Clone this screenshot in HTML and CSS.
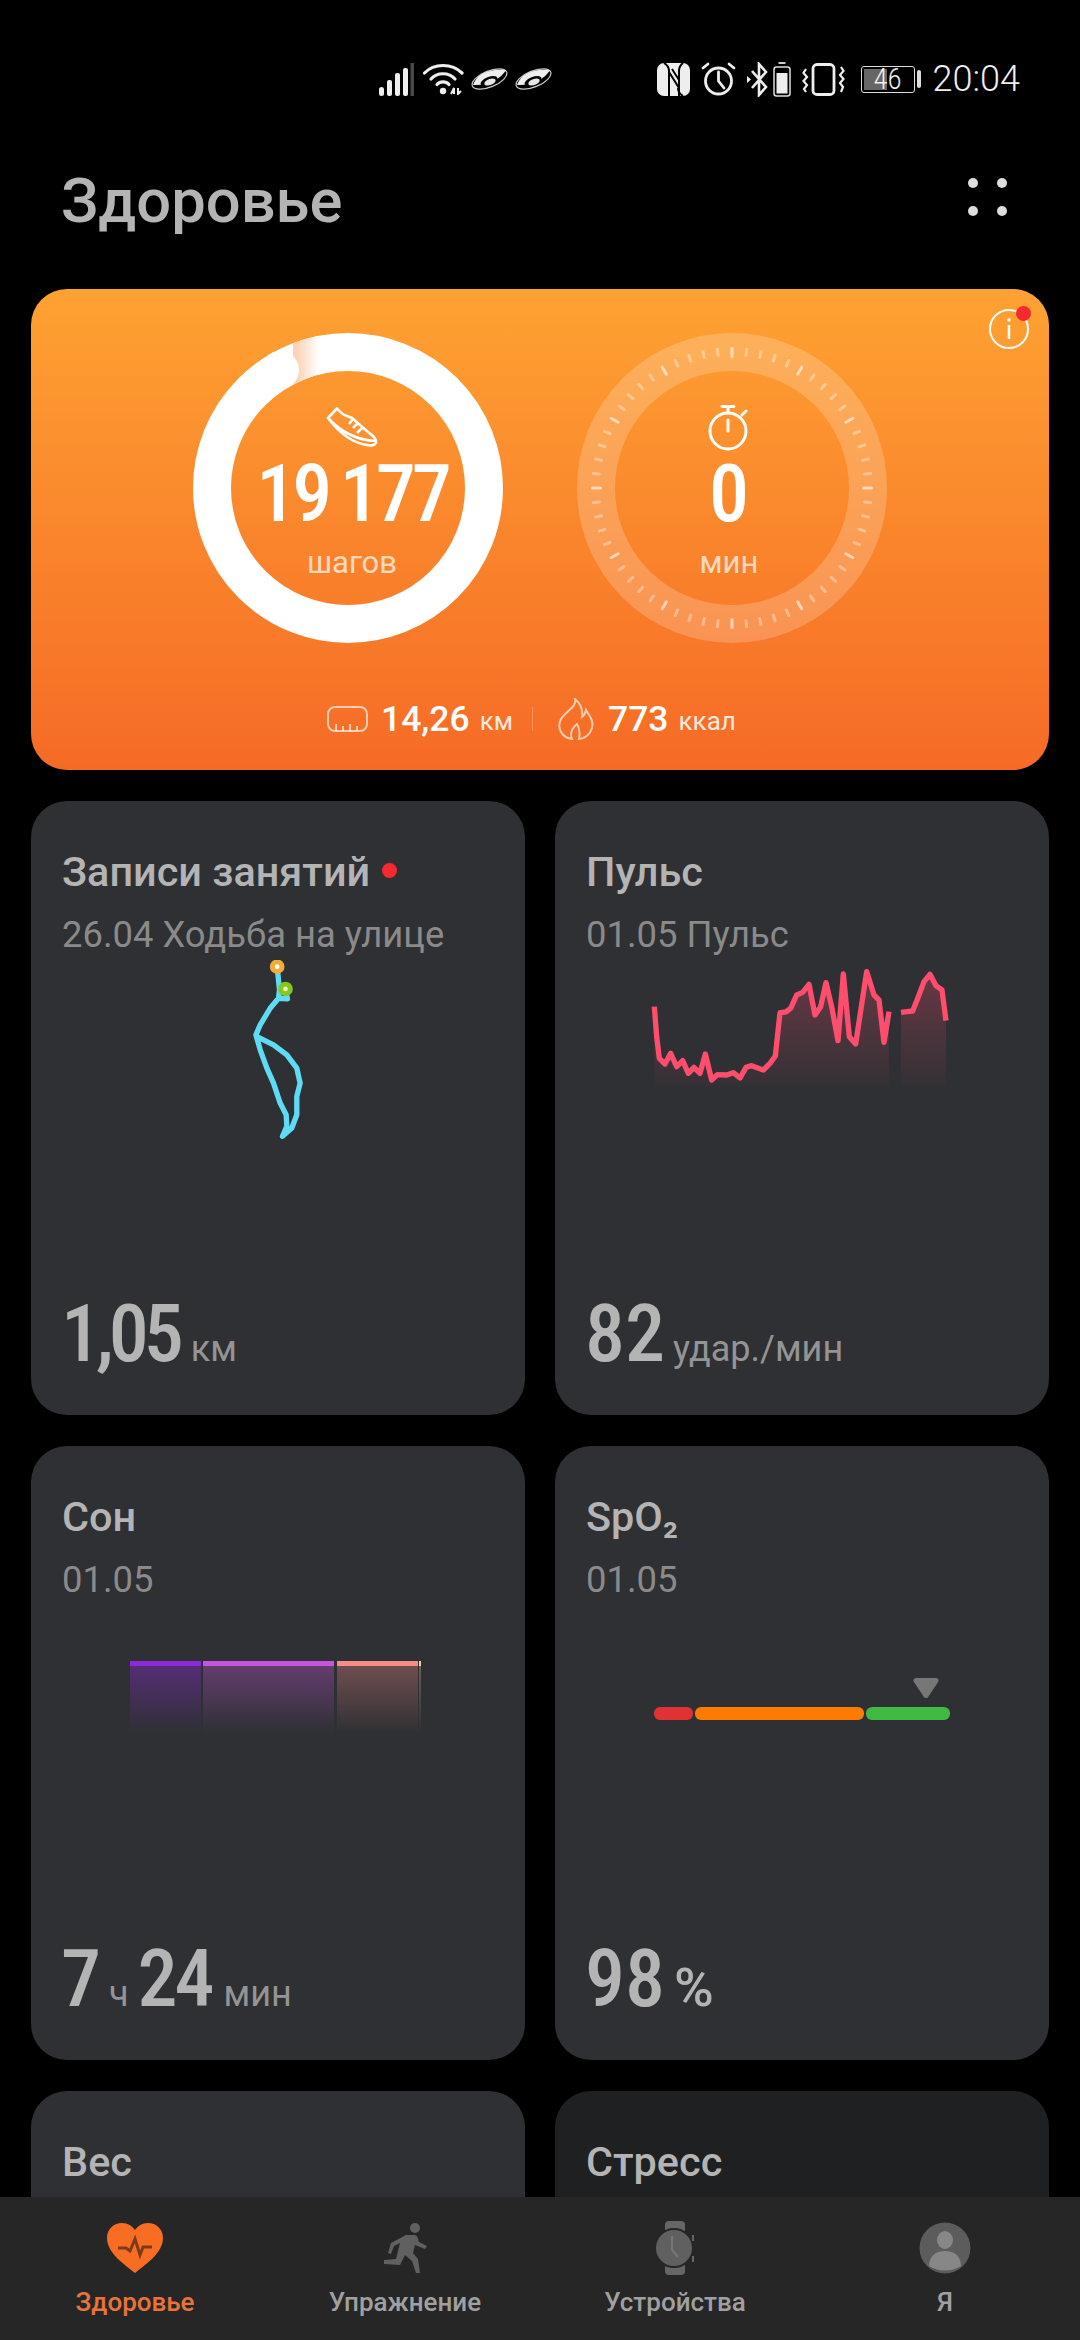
FILE: index.html
```html
<!DOCTYPE html>
<html lang="ru">
<head>
  <meta charset="UTF-8" />
  <title>Здоровье</title>
  <link rel="stylesheet" href="styles.css">
</head>
<body>
  <div class="statusbar">
    <div class="status-left">
      <svg class="s-signal" width="35" height="33" viewBox="0 0 35 33"><g fill="#eee"><rect x="0" y="24" width="5" height="9" rx="2.5"/><rect x="8" y="17" width="5" height="16" rx="2"/><rect x="16" y="10" width="5" height="23" rx="2"/><rect x="24" y="5" width="5" height="28" rx="2"/></g><rect x="31.5" y="0" width="3.5" height="33" fill="#4a4a4a"/></svg>
      <svg class="s-wifi" width="41" height="32" viewBox="0 0 41 32" fill="none" stroke="#eee" stroke-width="3.2" stroke-linecap="round"><path d="M1.5 10C11 0 29 0 39 10"/><path d="M8 16C14 9 26 9 32 16"/><path d="M14 21.500C17 18 23 18 26 21.500"/><circle cx="20" cy="28" r="3.200" fill="#eee" stroke="none"/><path d="M28 31L31 25V31M35 25V31L38 28" stroke-width="2" stroke-linecap="butt"/></svg>
      <svg class="s-ufo" width="37" height="24" viewBox="0 0 37 24"><ellipse cx="18.500" cy="12" rx="18.500" ry="8" transform="rotate(-22 18.500 12)" fill="none" stroke="#ccc" stroke-width="1.200"/><path d="M2 18C5 8 17 1 35 3C30 12 16 19 2 18Z" fill="#eee"/><ellipse cx="18" cy="14" rx="9" ry="4" transform="rotate(-22 18 14)" fill="#000"/><ellipse cx="19" cy="15" rx="6" ry="3" transform="rotate(-22 19 15)" fill="#e6e6e6"/></svg>
      <svg class="s-ufo" width="37" height="24" viewBox="0 0 37 24"><ellipse cx="18.500" cy="12" rx="18.500" ry="8" transform="rotate(-22 18.500 12)" fill="none" stroke="#ccc" stroke-width="1.200"/><path d="M2 18C5 8 17 1 35 3C30 12 16 19 2 18Z" fill="#eee"/><ellipse cx="18" cy="14" rx="9" ry="4" transform="rotate(-22 18 14)" fill="#000"/><ellipse cx="19" cy="15" rx="6" ry="3" transform="rotate(-22 19 15)" fill="#e6e6e6"/></svg>
    </div>
    <div class="status-right">
      <svg width="33" height="33" viewBox="0 0 33 33"><rect width="33" height="33" rx="7" fill="#eee"/><path d="M7 0Q12 3 12 8V33M12 9L22 25M15 6L22 17M22 33V8Q22 3 26 0M26 33Q21 30 21 25" fill="none" stroke="#000" stroke-width="2"/></svg>
      <svg class="s-alarm" width="35" height="34" viewBox="0 0 35 34" fill="none" stroke="#eee" stroke-width="2.800" stroke-linecap="round"><circle cx="17.500" cy="19" r="13"/><path d="M17.500 10V19L23 26M2 6L7 2M33 6L28 2"/></svg>
      <svg class="s-bt" width="23" height="35" viewBox="0 0 23 35"><path d="M5 9L19 25L12 33V2L19 10L5 26" fill="none" stroke="#eee" stroke-width="2.600"/><path d="M0 14L4 17.500L0 21Z" fill="#eee"/></svg>
      <svg class="s-bat" width="18" height="35" viewBox="0 0 18 35"><rect x="1" y="5" width="16" height="29" rx="2.500" fill="none" stroke="#ddd" stroke-width="1.500"/><rect x="5.500" y="0" width="7" height="2" fill="#ccc"/><rect x="3.500" y="11" width="11" height="20.500" fill="#eee"/></svg>
      <svg class="s-vib" width="43" height="33" viewBox="0 0 43 33" fill="none" stroke="#eee"><rect x="11" y="1.500" width="21" height="30" rx="4" stroke-width="2.800"/><path d="M4 6L1.500 10L5 14L1.500 18L5 22L2 26L4 29M39 4L41.500 8L38 12L41.500 16L38 20L41 24L39 29" stroke-width="2.200"/></svg>
      <div class="battery"><div class="battery-fill"></div><span>46</span></div>
      <div class="battery-tip"></div>
      <div class="clock">20:04</div>
    </div>
  </div>

  <div class="header">
    <h1>Здоровье</h1>
    <div class="dots"><i></i><i></i><i></i><i></i></div>
  </div>

  <div class="hero">
    <svg class="info" width="42" height="42" viewBox="0 0 42 42" fill="none" stroke="#fff" stroke-width="2"><circle cx="21" cy="21" r="19"/><path d="M21 17V31" stroke-width="2.500"/><circle cx="21" cy="12" r="1.800" fill="#fff" stroke="none"/></svg>
    <i class="info-dot"></i>
    <div class="rings">
      <div class="ring">
        <svg class="ring-bg" width="310" height="310" viewBox="0 0 310 310">
          <defs><linearGradient id="fade" gradientUnits="userSpaceOnUse" x1="104" x2="126" y1="0" y2="0"><stop offset="0" stop-color="#fcd3b6"/><stop offset="1" stop-color="#fff"/></linearGradient></defs>
          <circle cx="155" cy="155" r="136" fill="none" stroke="#fff" stroke-width="38"/>
          <path d="M100 10A155 155 0 0 1 126 3L131 40A117 117 0 0 0 100 52Z" fill="url(#fade)"/>
          <circle cx="87" cy="37" r="19" fill="#fff"/>
        </svg>
        <div class="ring-body to-right">
          <svg class="ring-icon" width="52" height="40" viewBox="0 0 52 40" fill="none" stroke="#fff" stroke-width="2.600" stroke-linejoin="round"><path d="M2 11L11 1.500C14 5 17 8 21 9L26 11L42 25C47 29 50.500 31 50 36C49 38 45 39 41 38C28 36 14 27 2 11Z"/><path d="M3 12C15 25 31 33 50 34M27 12L23 17M32 16L27 21M37 20L31 26"/></svg>
          <div class="ring-num ring-num-long">19 177</div>
          <div class="ring-label">шагов</div>
        </div>
      </div>
      <div class="ring">
        <svg class="ring-bg" id="dial" width="310" height="310" viewBox="0 0 310 310"><circle cx="155" cy="155" r="136" fill="none" stroke="#fff" stroke-opacity=".2" stroke-width="38"/></svg>
        <div class="ring-body to-left">
          <svg class="ring-icon watch" width="44" height="48" viewBox="0 0 44 48" fill="none" stroke="#fff" stroke-width="3"><circle cx="21" cy="27" r="18"/><path d="M15 2.500H27M21 3V9M21 16V27M35 11L39 7" stroke-linecap="round"/></svg>
          <div class="ring-num">0</div>
          <div class="ring-label">мин</div>
        </div>
      </div>
    </div>
    <div class="totals">
      <svg class="t-icon" width="41" height="26" viewBox="0 0 41 26" fill="none" stroke="#fff" stroke-opacity=".65" stroke-width="2"><rect x="1" y="1" width="39" height="24" rx="7"/><path d="M9 25V18M16 25V20M23 25V18M30 25V20"/></svg>
      <b>14,26</b><span>км</span>
      <i class="totals-sep"></i>
      <svg class="t-icon" width="38" height="42" viewBox="0 0 38 42" fill="none" stroke="#fff" stroke-opacity=".65" stroke-width="2"><path d="M18 1C20 9 9 13 4 21C-1 31 6 40 15 41C13 36 14 31 20 26C23 31 23 36 22 41C31 40 37 32 35 23C34 19 31 16 29 12C28 16 27 18 25 19C26 12 24 6 18 1Z"/></svg>
      <b>773</b><span>ккал</span>
    </div>
  </div>

  <div class="grid">
    <div class="card">
      <div class="card-title">Записи занятий<i class="red-dot"></i></div>
      <div class="card-sub">26.04 Ходьба на улице</div>
      <div class="card-chart">
        <svg class="route" width="57" height="183" viewBox="660 420 170 550">
          <path d="M741 440L748 510L745 535L720 565L690 615L677 645L690 690L710 745L730 790L750 850L768 885L770 920L757 950L785 925L800 885L800 830L810 790L800 745L770 705L730 675L680 650M745 535L772 537L766 507" fill="none" stroke="#5fdcf5" stroke-width="16" stroke-linecap="round" stroke-linejoin="round"/>
          <circle cx="741" cy="440" r="22" fill="#f2ac3a"/><circle cx="741" cy="440" r="7" fill="#fff"/>
          <circle cx="766" cy="507" r="22" fill="#84c71f"/><circle cx="766" cy="507" r="7" fill="#e8f5c0"/>
        </svg>
      </div>
      <div class="card-value"><b class="tight-more">1,05</b><span>км</span></div>
    </div>
    <div class="card">
      <div class="card-title">Пульс</div>
      <div class="card-sub">01.05 Пульс</div>
      <div class="card-chart">
        <svg class="pulse" id="pulse" width="360" height="170" viewBox="0 0 1080 510">
          <defs><linearGradient id="pulsefill" gradientUnits="userSpaceOnUse" x1="0" x2="0" y1="65" y2="410"><stop offset="0" stop-color="#ff4d6d" stop-opacity=".28"/><stop offset="1" stop-color="#ff4d6d" stop-opacity=".02"/></linearGradient></defs>
        </svg>
      </div>
      <div class="card-value"><b>82</b><span class="unit-near">удар./мин</span></div>
    </div>
    <div class="card">
      <div class="card-title">Сон</div>
      <div class="card-sub">01.05</div>
      <div class="card-chart">
        <div class="sleep">
          <div class="sleep-seg deep"></div>
          <div class="sleep-seg light"></div>
          <div class="sleep-seg rem"></div>
          <div class="sleep-seg wake"></div>
        </div>
      </div>
      <div class="card-value"><b>7</b><span class="unit-near">ч</span><b class="tight">24</b><span>мин</span></div>
    </div>
    <div class="card">
      <div class="card-title">SpO₂</div>
      <div class="card-sub">01.05</div>
      <div class="card-chart">
        <div class="spo">
          <svg class="spo-marker" width="26" height="20" viewBox="0 0 26 20"><path d="M3 2.500H23L13 17.500Z" fill="#777" stroke="#777" stroke-width="5" stroke-linejoin="round"/></svg>
          <div class="spo-bar"><i class="low"></i><i class="mid"></i><i class="high"></i></div>
        </div>
      </div>
      <div class="card-value"><b>98</b><span class="pct">%</span></div>
    </div>
    <div class="card"><div class="card-title">Вес</div></div>
    <div class="card card-dark"><div class="card-title">Стресс</div></div>
  </div>

  <div class="tabbar">
    <div class="tab active">
      <svg width="56" height="50" viewBox="0 0 56 50"><path d="M28 50C18 42 0 30 0 15C0 6 7 0 15 0C21 0 25 3 28 7C31 3 35 0 41 0C49 0 56 6 56 15C56 30 38 42 28 50Z" fill="#f96d22"/><path d="M11 25H19L23 28L28 16L33 32L36 24H45" fill="none" stroke="#7d3a1a" stroke-width="3"/></svg>
      <span>Здоровье</span>
    </div>
    <div class="tab">
      <svg width="46" height="52" viewBox="0 0 46 52" fill="#606060"><circle cx="33" cy="6" r="5"/><path d="M24 13L33 13C36 14 36 17 37 20L45 24L43 27L33 23L31 31L36 37L38 51H34L30 39L23 33L18 43L2 42V38L14 37L18 21L12 24L9 32L6 31L9 21Z"/></svg>
      <span>Упражнение</span>
    </div>
    <div class="tab">
      <svg width="40" height="54" viewBox="0 0 40 54"><rect x="10" y="0" width="20" height="54" rx="4" fill="#666"/><circle cx="19" cy="27" r="19" fill="#606060" stroke="#262626" stroke-width="2"/><path d="M17 15V29L23 36" fill="none" stroke="#777" stroke-width="2"/><rect x="37" y="14" width="2" height="6" fill="#666"/><rect x="37" y="35" width="2" height="6" fill="#666"/></svg>
      <span>Устройства</span>
    </div>
    <div class="tab">
      <svg width="52" height="52" viewBox="0 0 52 52"><circle cx="26" cy="26" r="25.500" fill="#5c5c5c"/><ellipse cx="26" cy="18" rx="8" ry="9" fill="#878787"/><path d="M10 44C10 34 17 29 26 29C35 29 42 34 42 44C32 50 20 50 10 44Z" fill="#878787"/></svg>
      <span>Я</span>
    </div>
  </div>

  <script>
    // dial ticks for the active-minutes ring
    var NS = "http://www.w3.org/2000/svg";
    var dial = document.getElementById("dial");
    for (var a = 0; a < 60; a++) {
      var major = a % 5 == 0;
      var t = document.createElementNS(NS, "rect");
      t.setAttribute("x", 153.5);
      t.setAttribute("y", 14);
      t.setAttribute("width", 3);
      t.setAttribute("height", major ? 11 : 9);
      t.setAttribute("rx", 1.5);
      t.setAttribute("fill", "#fff");
      t.setAttribute("fill-opacity", major ? 0.6 : 0.35);
      t.setAttribute("transform", "rotate(" + (a * 6) + " 155 155)");
      dial.appendChild(t);
    }

    // pulse line, two stretches with a gap between them
    var stretches = [
      "103 170,110 260,118 325,135 342,152 310,170 350,188 332,205 370,222 352,240 370,256 312,275 390,292 374,320 375,340 368,360 384,378 352,395 347,430 360,450 340,466 318,480 188,497 186,512 175,530 135,548 127,567 103,585 195,602 170,618 98,635 170,654 272,670 72,688 260,707 282,740 65,762 135,777 150,792 277,807 185",
      "843 187,860 185,878 183,895 140,912 95,930 73,948 107,966 120,978 212"
    ];
    var pulse = document.getElementById("pulse");
    stretches.forEach(function(s) {
      var pts = s.split(",");
      var first = pts[0].split(" ")[0], last = pts[pts.length - 1].split(" ")[0];
      var area = document.createElementNS(NS, "polygon");
      area.setAttribute("points", s + "," + last + " 410," + first + " 410");
      area.setAttribute("fill", "url(#pulsefill)");
      pulse.appendChild(area);
      var line = document.createElementNS(NS, "polyline");
      line.setAttribute("points", s);
      line.setAttribute("fill", "none");
      line.setAttribute("stroke", "#ff4d6d");
      line.setAttribute("stroke-width", 16);
      line.setAttribute("stroke-linejoin", "round");
      pulse.appendChild(line);
    });
  </script>
</body>
</html>
```

FILE: styles.css
```css
html, body {
  margin: 0;
  height: 2340px;
  overflow: hidden;
}
body {
  font-family: Roboto, 'Noto Sans', sans-serif;
  background: #000;
  color: #b4b4b4;
  position: relative;
}
.statusbar {
  height: 120px;
  display: flex;
  justify-content: space-between;
  align-items: flex-start;
  padding: 62px 60px 0 379px;
  box-sizing: border-box;
}
.status-left, .status-right {
  display: flex;
  align-items: center;
  height: 34px;
}
.s-wifi { margin-left: 9px; }
.s-ufo { margin-left: 7px; }
.s-alarm { margin-left: 11px; }
.s-bt { margin-left: 11px; }
.s-bat { margin-left: 3px; }
.s-vib { margin-left: 11px; }
.battery {
  width: 54px;
  height: 27px;
  border: 1.5px solid #ddd;
  border-radius: 3px;
  box-sizing: border-box;
  position: relative;
  margin-left: 16px;
}
.battery-fill {
  position: absolute;
  left: 2px; top: 2px; bottom: 2px;
  width: 23px;
  background: #666;
}
.battery span {
  position: relative;
  display: block;
  text-align: center;
  font-size: 29px;
  font-weight: 300;
  line-height: 24px;
  font-stretch: 75%;
  color: #eee;
}
.battery-tip {
  width: 4px;
  height: 18px;
  background: #ddd;
  border-radius: 2px;
  margin-left: 2px;
}
.clock {
  font-size: 36px;
  font-weight: 300;
  font-stretch: 90%;
  color: #eee;
  margin-left: 12px;
}
.header {
  height: 169px;
  display: flex;
  justify-content: space-between;
  align-items: center;
  padding: 0 73px 8px 61px;
  box-sizing: border-box;
}
h1 {
  margin: 0;
  font-size: 61.5px;
  font-weight: 500;
  color: #b4b4b4;
}
.dots {
  display: grid;
  grid-template-columns: 10px 10px;
  gap: 18px 19px;
  margin-bottom: 8px;
}
.dots i {
  width: 10px;
  height: 10px;
  border-radius: 50%;
  background: #ddd;
}
.hero {
  margin: 0 31px;
  height: 481px;
  border-radius: 36px;
  background: linear-gradient(to bottom, #fea232, #f66a26);
  position: relative;
  overflow: hidden;
  color: #fff;
}
.info {
  position: absolute;
  top: 19px;
  right: 19px;
}
.info-dot {
  position: absolute;
  top: 17px;
  right: 18px;
  width: 15px;
  height: 15px;
  border-radius: 50%;
  background: #f5292f;
}
.rings {
  display: flex;
  justify-content: center;
  gap: 74px;
  padding-top: 44px;
}
.ring {
  width: 310px;
  height: 310px;
  position: relative;
}
.ring-bg {
  position: absolute;
  left: 0;
  top: 0;
}
.ring-body {
  position: relative;
  height: 100%;
  display: flex;
  flex-direction: column;
  align-items: center;
  padding-top: 74px;
  box-sizing: border-box;
}
.ring-body.to-right { padding-left: 8px; }
.ring-body.to-left { padding-right: 6px; }
.ring-icon { height: 40px; }
.ring-icon.watch { height: 48px; margin-top: -3px; margin-bottom: -5px; }
.ring-num {
  font-size: 80px;
  line-height: 80px;
  margin-top: 7px;
  font-weight: 500;
  font-stretch: 75%;
  white-space: nowrap;
}
.ring-num-long {
  letter-spacing: -4px;
  word-spacing: -3px;
}
.ring-label {
  font-size: 31px;
  margin-top: 10px;
  opacity: .7;
}
.totals {
  position: absolute;
  left: 0;
  right: 0;
  top: 405px;
  height: 50px;
  display: flex;
  align-items: center;
  padding-left: 296px;
  box-sizing: border-box;
}
.totals b {
  font-size: 35.5px;
  font-weight: 500;
  margin-left: 13px;
}
.totals span {
  font-size: 26px;
  opacity: .85;
  margin: 4px 0 0 10px;
}
.totals-sep {
  width: 1px;
  height: 24px;
  background: rgba(255,255,255,.25);
  margin: 0 24px 0 19px;
}
.grid {
  margin: 31px 31px 0;
  display: grid;
  grid-template-columns: 494px 494px;
  column-gap: 30px;
  row-gap: 31px;
  grid-auto-rows: 614px;
}
.card {
  background: #2f3034;
  border-radius: 36px;
  padding: 47px 31px 0;
  display: flex;
  flex-direction: column;
  box-sizing: border-box;
}
.card-dark { background: #1f2022; }
.card-title {
  font-size: 41.4px;
  font-weight: 500;
  line-height: 48px;
  color: #b4b4b4;
  display: flex;
  align-items: center;
}
.red-dot {
  width: 15px;
  height: 15px;
  border-radius: 50%;
  background: #f5292f;
  margin: -4px 0 0 12px;
}
.card-sub {
  font-size: 36.4px;
  line-height: 42px;
  margin-top: 18px;
  color: #8a8a8a;
}
.card-chart {
  flex: 1;
  position: relative;
}
.card-value {
  display: flex;
  align-items: baseline;
  gap: 12px;
  padding-bottom: 41px;
  margin-left: -1px;
  color: #b4b4b4;
}
.card-value b {
  font-size: 80px;
  font-weight: 500;
  font-stretch: 75%;
  line-height: 80px;
}
.card-value b.tight {
  letter-spacing: -3px;
  margin-left: -3px;
}
.card-value b.tight-more { letter-spacing: -5px; }
.card-value span {
  font-size: 36px;
  color: #949494;
}
.card-value span.unit-near { margin-left: -4px; }
.card-value .pct {
  font-size: 54px;
  font-weight: 500;
  margin-left: -3px;
  color: #b4b4b4;
}
.route {
  position: absolute;
  top: 4px;
  left: 188px;
}
.pulse {
  position: absolute;
  top: -6px;
  left: 34px;
}
.sleep {
  position: absolute;
  top: 60px;
  left: 68px;
  display: flex;
}
.sleep-seg {
  height: 67px;
  border-top: 5px solid;
}
.deep {
  width: 71px;
  border-color: #8a2bd6;
  background: linear-gradient(to bottom, rgba(138,43,214,.4), rgba(138,43,214,0));
}
.light {
  width: 131px;
  margin-left: 2px;
  border-color: #c455dc;
  background: linear-gradient(to bottom, rgba(196,85,220,.35), rgba(196,85,220,0));
}
.rem {
  width: 81px;
  margin-left: 3px;
  border-color: #f58c87;
  background: linear-gradient(to bottom, rgba(245,140,135,.32), rgba(245,140,135,0));
}
.wake {
  width: 2px;
  margin-left: 1px;
  border-color: #f5d09a;
  background: linear-gradient(to bottom, rgba(245,208,154,.3), rgba(245,208,154,0));
}
.spo {
  position: absolute;
  top: 77px;
  left: 68px;
  width: 296px;
}
.spo-marker {
  display: block;
  margin: 0 0 9px 259px;
}
.spo-bar {
  display: flex;
  gap: 2px;
  height: 13px;
}
.spo-bar i {
  border-radius: 6px;
}
.low { width: 39px; background: #e03232; }
.mid { width: 169px; background: #ff7a00; }
.high { width: 84px; background: #41b943; }
.tabbar {
  position: absolute;
  left: 0;
  right: 0;
  top: 2197px;
  height: 143px;
  background: #262626;
  display: grid;
  grid-template-columns: 270px 270px 270px 270px;
}
.tab {
  display: flex;
  flex-direction: column;
  align-items: center;
  padding-top: 24px;
  height: 100%;
  box-sizing: border-box;
  font-size: 26px;
  font-weight: 500;
  color: #a0a0a0;
}
.tab svg {
  height: 54px;
}
.tab span {
  margin-top: 12px;
}
.tab.active {
  color: #e8743a;
}
```
